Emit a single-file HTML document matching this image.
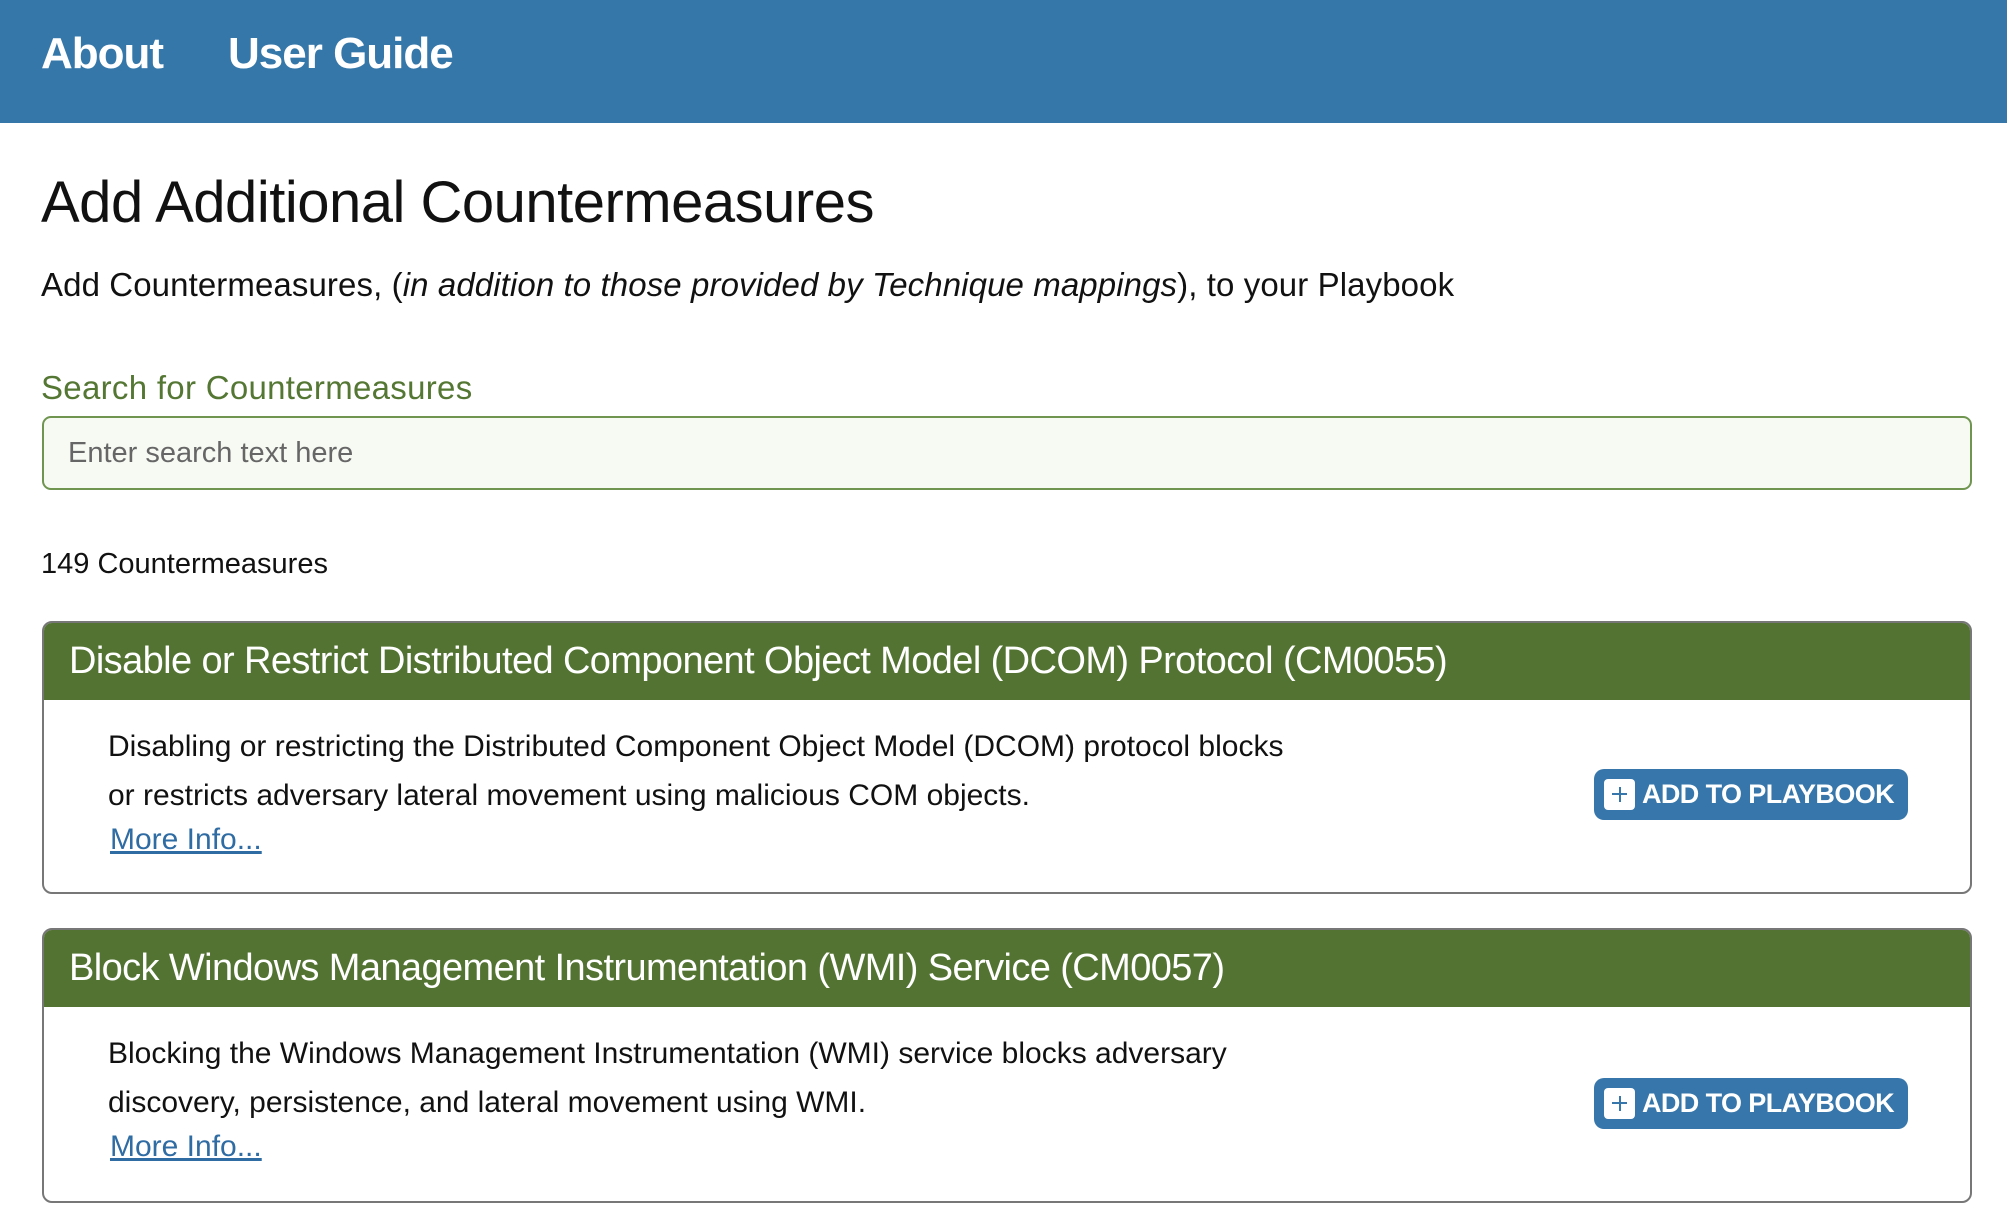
<!DOCTYPE html>
<html><head><meta charset="utf-8"><style>
*{margin:0;padding:0;box-sizing:border-box}
body{width:2007px;height:1222px;background:#fff;font-family:"Liberation Sans",sans-serif;color:#111;position:relative;overflow:hidden}
.nav{position:absolute;left:0;top:0;width:2007px;height:123px;background:#3677aa}
.nav span{position:absolute;top:26px;color:#fff;font-size:44px;line-height:56px;letter-spacing:-1px;font-weight:bold}
.abs{position:absolute;white-space:nowrap}
.card{position:absolute;left:42px;width:1930px;border:2px solid #777;border-radius:10px;overflow:hidden}
.hd{height:77px;background:#537332;color:#fff;font-size:38px;line-height:77px;padding-left:25px;letter-spacing:-0.6px;white-space:nowrap}
.body{position:relative}
.txt{position:absolute;left:64px;font-size:30px;line-height:49px;color:#111;white-space:nowrap}
.more{position:absolute;left:66px;font-size:30px;color:#2f6ca3;text-decoration:underline}
.btn{position:absolute;left:1550px;width:314px;height:51px;background:#3676aa;border-radius:10px;color:#fff;font-weight:bold;font-size:27px;line-height:51px;padding-left:48px;letter-spacing:-0.6px;white-space:nowrap}
.btn i{position:absolute;left:10px;top:10px;width:31px;height:31px;background:#fff;border-radius:4px}
.btn i:before{content:"";position:absolute;left:8px;top:14px;width:15px;height:2px;background:#3676aa}
.btn i:after{content:"";position:absolute;left:14.5px;top:8px;width:2px;height:15px;background:#3676aa}
</style></head><body>
<div class="nav"><span style="left:41px">About</span><span style="left:228px">User Guide</span></div>
<div class="abs" style="left:41px;top:168px;font-size:58px;line-height:70px;letter-spacing:-0.5px">Add Additional Countermeasures</div>
<div class="abs" style="left:41px;top:265px;font-size:33px;line-height:40px;letter-spacing:0.1px">Add Countermeasures, (<i>in addition to those provided by Technique mappings</i>), to your Playbook</div>
<div class="abs" style="left:41px;top:368px;font-size:33px;line-height:40px;color:#557734;letter-spacing:0.3px">Search for Countermeasures</div>
<div class="abs" style="left:42px;top:416px;width:1930px;height:74px;border:2px solid #6f9550;border-radius:9px;background:#f7faf3"></div>
<div class="abs" style="left:68px;top:434px;font-size:29px;line-height:38px;color:#666">Enter search text here</div>
<div class="abs" style="left:41px;top:545px;font-size:29px;line-height:38px">149 Countermeasures</div>

<div class="card" style="top:621px;height:273px">
<div class="hd">Disable or Restrict Distributed Component Object Model (DCOM) Protocol (CM0055)</div>
<div class="body">
<div class="txt" style="top:22px">Disabling or restricting the Distributed Component Object Model (DCOM) protocol blocks<br>or restricts adversary lateral movement using malicious COM objects.</div>
<div class="more" style="top:123px">More Info...</div>
<div class="btn" style="top:69px"><i></i>ADD TO PLAYBOOK</div>
</div></div>

<div class="card" style="top:928px;height:275px">
<div class="hd">Block Windows Management Instrumentation (WMI) Service (CM0057)</div>
<div class="body">
<div class="txt" style="top:22px">Blocking the Windows Management Instrumentation (WMI) service blocks adversary<br>discovery, persistence, and lateral movement using WMI.</div>
<div class="more" style="top:123px">More Info...</div>
<div class="btn" style="top:71px"><i></i>ADD TO PLAYBOOK</div>
</div></div>
</body></html>
